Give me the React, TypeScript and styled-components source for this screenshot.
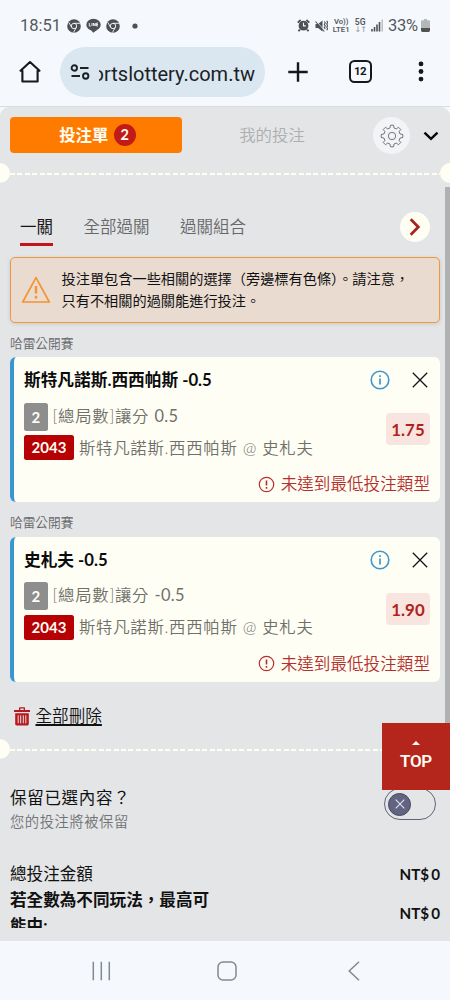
import React from "react";
import styled, { createGlobalStyle } from "styled-components";

const Global = createGlobalStyle`
  * { box-sizing: border-box; }
  html, body { margin: 0; padding: 0; }
  body { background: #f5f9fe; }
  button { font: inherit; color: inherit; border: 0; padding: 0; background: none; letter-spacing: inherit; }
  svg { display: block; flex: none; }
`;

const Phone = styled.div`
  width: 450px;
  height: 1000px;
  overflow: hidden;
  display: flex;
  flex-direction: column;
  background: #f5f9fe;
  font-family: Lato, "Noto Sans CJK TC", sans-serif;
  color: #111;
`;

/* ---------- system bars ---------- */

const StatusBar = styled.header`
  height: 40px;
  padding: 11px 20px 0 20px;
  display: flex;
  justify-content: space-between;
  font-family: Roboto, sans-serif;
  color: #55585b;
`;
const StatusGroup = styled.div`
  height: 29px;
  display: flex;
  align-items: center;
  gap: 5px;
`;
const Clock = styled.span`
  font-size: 16.5px;
  line-height: 29px;
  width: 41px;
  margin-right: 1px;
  white-space: nowrap;
`;
const MoreDot = styled.span`
  margin-left: 7px;
`;
const Stacked = styled.span<{ $size: number }>`
  display: flex;
  flex-direction: column;
  align-items: center;
  font-size: ${(p) => p.$size}px;
  font-weight: 600;
  line-height: 8px;
  white-space: nowrap;
`;
const Arrows = styled.span`
  color: #a5a8ab;
  font-size: 8px;
  font-family: "DejaVu Sans", sans-serif;
  line-height: 8px;
  letter-spacing: -1px;
`;
const BatteryGroup = styled.span`
  display: flex;
  align-items: center;
  gap: 3px;
`;
const Battery = styled.span`
  font-size: 16.5px;
  line-height: 29px;
  letter-spacing: -0.2px;
`;

const BrowserBar = styled.div`
  height: 67px;
  padding: 7px 20px 10px 18px;
  display: flex;
  align-items: center;
  border-bottom: 1px solid #d9dcdf;
`;
const Omnibox = styled.div`
  width: 205px;
  height: 50px;
  margin: 0 22.5px 0 18px;
  padding-left: 10px;
  border-radius: 25px;
  background: #dae7f0;
  display: flex;
  align-items: center;
  gap: 9px;
`;
const Address = styled.div`
  width: 156px;
  height: 30px;
  overflow: hidden;
  display: flex;
  justify-content: flex-end;
  font-family: Roboto, sans-serif;
  font-size: 20px;
  line-height: 34px;
  white-space: nowrap;
  color: #1b2226;
`;
const TabCount = styled.div`
  width: 23px;
  height: 23px;
  margin: 0 46px 0 41px;
  border: 2.4px solid #15191c;
  border-radius: 5.5px;
  font-family: Roboto, sans-serif;
  font-weight: 700;
  font-size: 11.5px;
  letter-spacing: -0.6px;
  line-height: 18.5px;
  text-align: center;
  color: #15191c;
`;

const NavBar = styled.nav`
  height: 59px;
  padding: 1px 90px 0 92px;
  display: flex;
  align-items: center;
`;
const HomeKey = styled.span`
  margin: 0 auto 0 106px;
`;

/* ---------- bet slip ---------- */

const Page = styled.main`
  position: relative;
  height: 834px;
  overflow: hidden;
  background: #e4e5e7;
  border-radius: 9px 9px 0 0;
`;
const Viewport = styled.div`
  height: 821px;
  overflow: hidden;
`;
const SlipHeader = styled.div`
  height: 56px;
  padding: 10px 11.5px 0 10px;
  display: flex;
  align-items: flex-start;
`;
const SlipTab = styled.button<{ $active?: boolean }>`
  width: ${(p) => (p.$active ? 172 : 180)}px;
  height: 36px;
  padding-left: ${(p) => (p.$active ? 3 : 0)}px;
  border-radius: 4px;
  display: flex;
  align-items: center;
  justify-content: center;
  gap: 5.5px;
  font-size: 16.4px;
  line-height: 24px;
  font-weight: ${(p) => (p.$active ? 700 : 350)};
  color: ${(p) => (p.$active ? "#fffdf3" : "#acaeb0")};
  background: ${(p) => (p.$active ? "#ff7b00" : "transparent")};
`;
const CountBadge = styled.span`
  width: 22px;
  height: 22px;
  border-radius: 50%;
  background: #c21b17;
  color: #fffdf3;
  font-size: 14.5px;
  line-height: 22px;
  text-align: center;
`;
const GearButton = styled.button`
  width: 37px;
  height: 37px;
  margin: 0 12.5px 0 11px;
  border-radius: 50%;
  background: #f3f4f7;
  display: grid;
  place-items: center;
`;
const ChevronButton = styled.button`
  margin-top: 14px;
`;

const Perforation = styled.div`
  height: 20px;
  display: flex;
  align-items: center;
`;
const Notch = styled.span<{ $right?: boolean }>`
  flex: none;
  width: 10px;
  height: 20px;
  background: #fffef3;
  border-radius: ${(p) => (p.$right ? "10px 0 0 10px" : "0 10px 10px 0")};
`;
const Dashes = styled.span`
  flex: 1;
  height: 2.5px;
  margin-top: 2px;
  background: repeating-linear-gradient(90deg, #fffef3 0 5px, transparent 5px 7.4px);
`;

const TypeTabs = styled.div`
  height: 74px;
  padding: 26px 20px 0 20px;
  display: flex;
  gap: 30.5px;
`;
const TypeTab = styled.button<{ $active?: boolean }>`
  height: 37px;
  font-size: 16.5px;
  line-height: 36px;
  display: flex;
  align-items: flex-start;
  font-weight: ${(p) => (p.$active ? 400 : 350)};
  color: ${(p) => (p.$active ? "#151515" : "#66686a")};
  border-bottom: 3.6px solid ${(p) => (p.$active ? "#c2141b" : "transparent")};
`;
const NextButton = styled.button`
  width: 30px;
  height: 30px;
  margin: 3px 0 0 auto;
  border-radius: 50%;
  background: #fffef3;
  display: grid;
  place-items: center;
`;

const Notice = styled.div`
  height: 65.5px;
  margin: 0 10px;
  padding: 0 10px;
  border: 1.5px solid #ee9a3c;
  border-radius: 5px;
  background: #e9dbd0;
  box-shadow: 0 1px 4px rgba(0, 0, 0, 0.12);
  display: flex;
  align-items: center;
  gap: 10.5px;
`;
const NoticeText = styled.p`
  margin: 0;
  font-size: 14.2px;
  line-height: 21.6px;
  white-space: nowrap;
`;

const League = styled.h3`
  margin: 0 10px;
  height: 34.5px;
  padding-top: 10px;
  font-size: 12.7px;
  line-height: 20px;
  font-weight: 350;
  color: #66686b;
`;
const Card = styled.article`
  height: 145px;
  margin: 0 10px;
  border-left: 4px solid #3a96d2;
  border-radius: 6px;
  background: #fffef5;
  padding: 9px 10px 0 10px;
`;
const CardTop = styled.div`
  height: 28px;
  display: flex;
  align-items: center;
`;
const Pick = styled.h2`
  margin: 0 auto 0 0;
  font-size: 16.7px;
  line-height: 28px;
  font-weight: 700;
  white-space: nowrap;
  color: #0b0b0b;
`;
const RemoveButton = styled.button`
  margin: 0 2.5px 0 22px;
`;
const CardBody = styled.div`
  height: 70px;
  display: flex;
  justify-content: space-between;
`;
const Lines = styled.div`
  padding-top: 8.5px;
`;
const Line = styled.div`
  height: 32px;
  display: flex;
  align-items: flex-start;
  gap: 5px;
  font-size: 16.4px;
  line-height: 26px;
  letter-spacing: 0.72px;
  font-weight: 350;
  color: #6f706a;
  white-space: nowrap;
`;
const Handicap = styled.span`
  font-weight: 400;
  letter-spacing: 0.4px;
`;
const Tag = styled.span<{ $red?: boolean }>`
  width: ${(p) => (p.$red ? 50 : 23.5)}px;
  height: ${(p) => (p.$red ? 25 : 28)}px;
  margin-top: ${(p) => (p.$red ? 0.5 : 0)}px;
  border-radius: 2.5px;
  background: ${(p) => (p.$red ? "#b60003" : "#8d8e8d")};
  color: #fffef3;
  font-weight: 700;
  font-size: 15px;
  letter-spacing: ${(p) => (p.$red ? 0.1 : 0)}px;
  line-height: ${(p) => (p.$red ? 25 : 29)}px;
  text-align: center;
`;
const Odds = styled.strong`
  width: 44px;
  height: 32px;
  margin-top: 19px;
  border-radius: 4px;
  background: #f9e5df;
  color: #b0221e;
  font-size: 16.8px;
  line-height: 33px;
  font-weight: 700;
  letter-spacing: 0.1px;
  text-align: center;
`;
const ErrorLine = styled.div`
  margin-top: 6px;
  height: 28px;
  display: flex;
  justify-content: flex-end;
  align-items: center;
  gap: 6px;
  font-size: 16.6px;
  line-height: 28px;
  font-weight: 350;
  color: #b4302d;
`;

const DeleteAll = styled.button`
  margin: 21.5px 0 10px 14px;
  height: 26px;
  display: flex;
  align-items: center;
  gap: 5.5px;
  font-size: 16.6px;
  line-height: 26px;
  font-weight: 350;
`;
const DeleteLabel = styled.span`
  text-decoration: underline;
  text-decoration-thickness: 1.5px;
  text-underline-offset: 1.5px;
`;

const KeepRow = styled.section`
  height: 76px;
  margin-top: 10px;
  padding: 16px 14px 0 10px;
  display: flex;
  justify-content: space-between;
`;
const KeepTitle = styled.div`
  font-size: 16.5px;
  letter-spacing: 0.7px;
  line-height: 26px;
`;
const KeepHint = styled.div`
  font-size: 14.3px;
  letter-spacing: 0.55px;
  line-height: 22px;
  font-weight: 350;
  color: #717375;
`;
const Toggle = styled.button`
  width: 52.5px;
  height: 32px;
  margin-top: 3px;
  padding: 0 3.5px;
  border: 1px solid #626476;
  border-radius: 16px;
  display: flex;
  align-items: center;
`;
const Knob = styled.span`
  width: 23px;
  height: 23px;
  border-radius: 50%;
  background: #626482;
  border: 1px solid #44465f;
  display: grid;
  place-items: center;
`;

const TotalRow = styled.div<{ $bold?: boolean }>`
  padding: 0 10px;
  margin-top: ${(p) => (p.$bold ? -0.5 : 17)}px;
  display: flex;
  justify-content: space-between;
  align-items: ${(p) => (p.$bold ? "center" : "flex-start")};
  font-size: 16.6px;
  line-height: ${(p) => (p.$bold ? 26 : 25)}px;
  font-weight: ${(p) => (p.$bold ? 700 : 400)};
`;
const TotalLabel = styled.span`
  width: 206px;
`;
const Amount = styled.span`
  font-size: 15.2px;
  font-weight: 700;
  word-spacing: -1.6px;
`;

const Scrollbar = styled.div`
  position: absolute;
  right: 0;
  top: 80px;
  width: 5px;
  height: 560px;
  background: #afb1b3;
`;
const TopButton = styled.button`
  position: absolute;
  right: 0;
  top: 616px;
  width: 68px;
  height: 67px;
  padding-top: 18px;
  background: #b4251b;
  color: #fffdf3;
  display: flex;
  flex-direction: column;
  align-items: center;
  font-family: Roboto, sans-serif;
  font-weight: 600;
  font-size: 17px;
  line-height: 20px;
  letter-spacing: -0.3px;
  gap: 6px;
`;

/* ---------- icons ---------- */

const ChromeIcon = () => (
  <svg width="14" height="14" viewBox="0 0 14 14">
    <circle cx="7" cy="7" r="6.8" fill="#4e5154" />
    <g fill="none" stroke="#f5f9fe" strokeWidth="0.9">
      <circle cx="7" cy="7" r="2.7" />
      <path d="M7 4.3h6M4.7 8.4 1.8 3.4M9.3 8.4 6.4 13.6" />
    </g>
  </svg>
);
const ChatAppIcon = () => (
  <svg width="15" height="15" viewBox="0 0 15 15">
    <ellipse cx="7.5" cy="6.7" rx="7.2" ry="6" fill="#4e5154" />
    <path d="M5 12h6l-3.8 2.8z" fill="#4e5154" />
    <path d="M3.3 5v3h1.500M6 5v3M7.400 8V5l1.900 3V5M12 5h-1.400v3H12M10.600 6.500H12" fill="none" stroke="#f5f9fe" strokeWidth="0.9" />
  </svg>
);
const Dot = () => (
  <svg width="6" height="6" viewBox="0 0 6 6"><circle cx="3" cy="3" r="2.6" fill="#4e5154" /></svg>
);
const AlarmIcon = () => (
  <svg width="13" height="13" viewBox="0 0 13 13">
    <circle cx="6.5" cy="6.7" r="4.9" fill="#4e5154" />
    <path d="M.7 3.600 3.700 1M12.300 3.600 9.300 1M2.800 10.500 1.500 12.300M10.200 10.500l1.300 1.800" stroke="#4e5154" strokeWidth="1.9" />
    <path d="M6.500 3.800v3.100h2.300" fill="none" stroke="#f5f9fe" strokeWidth="1.1" />
  </svg>
);
const MuteIcon = () => (
  <svg width="13" height="14" viewBox="0 0 13 14">
    <path d="M.5 5h2.600L7.500 1.500v11L3.100 9H.5z" fill="#4e5154" />
    <path d="M.8 1.800 10 12.200" stroke="#f5f9fe" strokeWidth="1" />
    <path d="M.5 2.500 9.300 12.500" stroke="#4e5154" strokeWidth="1.1" />
    <path d="M9.300 2.500l1 1.500-1 1.500 1 1.500-1 1.500 1 1.500M11.700 1.800l1 1.600-1 1.600 1 1.600-1 1.600 1 1.600-1 1.500" fill="none" stroke="#4e5154" strokeWidth="1.1" />
  </svg>
);
const SignalIcon = () => (
  <svg width="12" height="13" viewBox="0 0 12 13">
    <path d="M1 10v2.500M3.500 8v4.500M6 5.500v7M8.500 3v9.500" stroke="#4e5154" strokeWidth="1.6" />
    <path d="M11.200.5v12" stroke="#b6babd" strokeWidth="1.4" />
  </svg>
);
const BatteryIcon = () => (
  <svg width="9" height="13" viewBox="0 0 9 13">
    <path d="M3 0h3v1.200h1.600A1.400 1.400 0 0 1 9 2.600V9H0V2.600a1.400 1.400 0 0 1 1.400-1.400H3z" fill="#b4b7ba" />
    <path d="M0 9h9v2.600A1.400 1.400 0 0 1 7.600 13H1.400A1.400 1.400 0 0 1 0 11.600z" fill="#505356" />
  </svg>
);
const HomeIcon = () => (
  <svg width="24" height="24" viewBox="0 0 24 24">
    <path d="M4.400 21.500V10.800H2.500L12 2l9.500 8.800h-1.900v10.700z" fill="none" stroke="#15191c" strokeWidth="2.1" strokeLinejoin="round" />
  </svg>
);
const TuneIcon = () => (
  <svg width="20" height="16" viewBox="0 0 20 16" fill="none" stroke="#1b2226" strokeWidth="1.9">
    <circle cx="4.3" cy="4" r="2.7" />
    <path d="M10 4h8.500M1.500 12h8.500" />
    <circle cx="15.7" cy="12" r="2.7" />
  </svg>
);
const PlusIcon = () => (
  <svg width="20" height="20" viewBox="0 0 20 20">
    <path d="M10 .3v19.400M.3 10h19.400" stroke="#15191c" strokeWidth="2.4" />
  </svg>
);
const MoreIcon = () => (
  <svg width="6" height="21" viewBox="0 0 6 21" fill="#15191c">
    <circle cx="3" cy="2.9" r="2.4" />
    <circle cx="3" cy="10.5" r="2.4" />
    <circle cx="3" cy="18.1" r="2.4" />
  </svg>
);
const gearPath = (() => {
  const point = (r: number, deg: number) => {
    const a = (deg * Math.PI) / 180;
    return `${(12 + r * Math.sin(a)).toFixed(2)} ${(12 - r * Math.cos(a)).toFixed(2)}`;
  };
  const parts: string[] = [];
  for (let i = 0; i < 8; i++) {
    const c = i * 45;
    parts.push(`${point(8.3, c - 14)} L${point(10.9, c - 8)} L${point(10.9, c + 8)} L${point(8.3, c + 14)}`);
  }
  return `M${parts.join(" L")}Z`;
})();
const GearIcon = () => (
  <svg width="24" height="24" viewBox="0 0 24 24" fill="none" stroke="#66686b" strokeWidth="0.9" strokeLinejoin="round">
    <path d={gearPath} />
    <circle cx="12" cy="12" r="3.7" />
  </svg>
);
const ChevronDown = () => (
  <svg width="16" height="10" viewBox="0 0 16 10">
    <path d="M1.500 1.600 8 7.800l6.500-6.200" fill="none" stroke="#0b0b0b" strokeWidth="2.5" />
  </svg>
);
const ChevronRight = () => (
  <svg width="12" height="18" viewBox="0 0 12 18">
    <path d="M1.700 1.300 9.300 9l-7.600 7.700" fill="none" stroke="#a9231f" strokeWidth="2.8" />
  </svg>
);
const WarningIcon = () => (
  <svg width="30" height="28" viewBox="0 0 30 28" fill="none" stroke="#f6932d">
    <path d="M15 1.700 28.300 26H1.700z" strokeWidth="1.7" strokeLinejoin="round" />
    <path d="M15 10v7.500M15 19.700v2.700" strokeWidth="2.4" />
  </svg>
);
const InfoIcon = () => (
  <svg width="20" height="20" viewBox="0 0 20 20" fill="none" stroke="#3f96ce">
    <circle cx="10" cy="10" r="8.8" strokeWidth="1.6" />
    <path d="M10 8.500v6M10 5.200v1.700" strokeWidth="1.7" />
  </svg>
);
const CloseIcon = () => (
  <svg width="16" height="16" viewBox="0 0 16 16">
    <path d="M.8.8l14.400 14.400M15.200.8.8 15.200" stroke="#151515" strokeWidth="1.3" />
  </svg>
);
const ErrorIcon = () => (
  <svg width="17" height="17" viewBox="0 0 17 17" fill="none" stroke="#b4302d">
    <circle cx="8.5" cy="8.5" r="7.2" strokeWidth="1.2" />
    <path d="M8.500 4.400v5.200M8.500 11v1.700" strokeWidth="1.6" />
  </svg>
);
const TrashIcon = () => (
  <svg width="16" height="19" viewBox="0 0 16 19">
    <path d="M0 3h5V1.200C5 .5 5.400.3 6 .3h4c.6 0 1 .2 1 .9V3h5v2H0zM6.300 3h3.400V1.600H6.300z" fill="#b8191c" fillRule="evenodd" />
    <path d="M1.200 6.200h13.600v10.600c0 1.200-.5 1.700-1.600 1.700H2.800c-1.100 0-1.600-.5-1.600-1.700z" fill="#b8191c" />
    <path d="M4.200 8.300v8M6.700 8.300v8M9.300 8.300v8M11.800 8.300v8" stroke="#e3e4e7" strokeWidth="1" />
  </svg>
);
const KnobCross = () => (
  <svg width="10" height="10" viewBox="0 0 10 10">
    <path d="M.7.7l8.600 8.600M9.300.7.7 9.300" stroke="#e3e4ee" strokeWidth="1.1" />
  </svg>
);
const UpArrow = () => (
  <svg width="8" height="4" viewBox="0 0 8 4"><path d="M4 0l4 4H0z" fill="#fffdf3" /></svg>
);
const RecentsIcon = () => (
  <svg width="19" height="20" viewBox="0 0 19 20">
    <path d="M1.300.7v18.600M9.300.7v18.600M17.300.7v18.600" stroke="#85898d" strokeWidth="1.5" />
  </svg>
);
const HomeKeyIcon = () => (
  <svg width="20" height="20" viewBox="0 0 20 20">
    <rect x="1" y="1" width="18" height="18" rx="5" fill="none" stroke="#85898d" strokeWidth="1.5" />
  </svg>
);
const BackIcon = () => (
  <svg width="12" height="20" viewBox="0 0 12 20">
    <path d="M11 .7 1.200 10l9.800 9.300" fill="none" stroke="#85898d" strokeWidth="1.5" />
  </svg>
);

/* ---------- content ---------- */

type Bet = { pick: string; market: string; handicap: string; odds: string };

const bets: Bet[] = [
  { pick: "斯特凡諾斯.西西帕斯 -0.5", market: "[總局數]讓分", handicap: "0.5", odds: "1.75" },
  { pick: "史札夫 -0.5", market: "[總局數]讓分", handicap: "-0.5", odds: "1.90" },
];

const BetCard = ({ bet }: { bet: Bet }) => (
  <>
    <League>哈雷公開賽</League>
    <Card>
      <CardTop>
        <Pick>{bet.pick}</Pick>
        <InfoIcon />
        <RemoveButton aria-label="移除"><CloseIcon /></RemoveButton>
      </CardTop>
      <CardBody>
        <Lines>
          <Line><Tag>2</Tag><span>{bet.market} <Handicap>{bet.handicap}</Handicap></span></Line>
          <Line><Tag $red>2043</Tag><span>斯特凡諾斯.西西帕斯 @ 史札夫</span></Line>
        </Lines>
        <Odds>{bet.odds}</Odds>
      </CardBody>
      <ErrorLine><ErrorIcon />未達到最低投注類型</ErrorLine>
    </Card>
  </>
);

export default function App() {
  return (
    <Phone lang="zh-Hant">
      <Global />
      <StatusBar>
        <StatusGroup>
          <Clock>18:51</Clock>
          <ChromeIcon />
          <ChatAppIcon />
          <ChromeIcon />
          <MoreDot><Dot /></MoreDot>
        </StatusGroup>
        <StatusGroup>
          <AlarmIcon />
          <MuteIcon />
          <Stacked $size={7.7}><span>Vo))</span><span>LTE1</span></Stacked>
          <Stacked $size={8.6}><span>5G</span><Arrows>↓↑</Arrows></Stacked>
          <SignalIcon />
          <BatteryGroup><Battery>33%</Battery><BatteryIcon /></BatteryGroup>
        </StatusGroup>
      </StatusBar>
      <BrowserBar>
        <HomeIcon />
        <Omnibox>
          <TuneIcon />
          <Address>ortslottery.com.tw</Address>
        </Omnibox>
        <PlusIcon />
        <TabCount>12</TabCount>
        <MoreIcon />
      </BrowserBar>

      <Page>
        <Viewport>
          <SlipHeader>
            <SlipTab $active>投注單<CountBadge>2</CountBadge></SlipTab>
            <SlipTab>我的投注</SlipTab>
            <GearButton aria-label="設定"><GearIcon /></GearButton>
            <ChevronButton aria-label="收合"><ChevronDown /></ChevronButton>
          </SlipHeader>
          <Perforation><Notch /><Dashes /><Notch $right /></Perforation>
          <TypeTabs>
            <TypeTab $active>一關</TypeTab>
            <TypeTab>全部過關</TypeTab>
            <TypeTab>過關組合</TypeTab>
            <NextButton aria-label="下一頁"><ChevronRight /></NextButton>
          </TypeTabs>
          <Notice>
            <WarningIcon />
            <NoticeText>
              投注單包含一些相關的選擇（旁邊標有色條）。請注意，
              <br />
              只有不相關的過關能進行投注。
            </NoticeText>
          </Notice>
          {bets.map((bet) => <BetCard key={bet.odds} bet={bet} />)}
          <DeleteAll><TrashIcon /><DeleteLabel>全部刪除</DeleteLabel></DeleteAll>
          <Perforation><Notch /><Dashes /><Notch $right /></Perforation>
          <KeepRow>
            <div>
              <KeepTitle>保留已選內容？</KeepTitle>
              <KeepHint>您的投注將被保留</KeepHint>
            </div>
            <Toggle aria-label="保留已選內容"><Knob><KnobCross /></Knob></Toggle>
          </KeepRow>
          <TotalRow>
            <TotalLabel>總投注金額</TotalLabel>
            <Amount>NT$ 0</Amount>
          </TotalRow>
          <TotalRow $bold>
            <TotalLabel>若全數為不同玩法，最高可能中:</TotalLabel>
            <Amount>NT$ 0</Amount>
          </TotalRow>
        </Viewport>
        <Scrollbar />
        <TopButton><UpArrow />TOP</TopButton>
      </Page>

      <NavBar>
        <RecentsIcon />
        <HomeKey><HomeKeyIcon /></HomeKey>
        <BackIcon />
      </NavBar>
    </Phone>
  );
}
